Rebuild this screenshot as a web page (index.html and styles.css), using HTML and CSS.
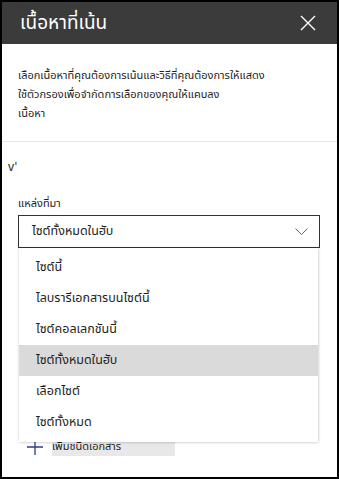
FILE: index.html
```html
<!DOCTYPE html>
<html lang="th">
<head>
<meta charset="utf-8">
<link rel="stylesheet" href="styles.css">
</head>
<body>
<div class="panel">
  <div class="header">
    <h1 class="title">เนื้อหาที่เน้น</h1>
    <svg class="close" width="16" height="16" viewBox="0 0 16 16"><path d="M1 1L15 15M15 1L1 15" stroke="#fff" stroke-width="1.4" fill="none"/></svg>
  </div>
  <div class="desc">
    <p>เลือกเนื้อหาที่คุณต้องการเน้นและวิธีที่คุณต้องการให้แสดง</p>
    <p>ใช้ตัวกรองเพื่อจำกัดการเลือกของคุณให้แคบลง</p>
    <p>เนื้อหา</p>
  </div>
  <div class="sep"></div>
  <div class="stray">v'</div>
  <div class="field">
    <div class="label">แหล่งที่มา</div>
    <div class="select">
      <span>ไซต์ทั้งหมดในฮับ</span>
      <svg class="chev" width="13" height="7" viewBox="0 0 13 7"><path d="M0.5 0.5L6.5 6.5L12.5 0.5" stroke="#666" stroke-width="1" fill="none"/></svg>
    </div>
  </div>
  <div class="add">
    <svg class="plus" width="16" height="16" viewBox="0 0 16 16"><path d="M8 0V16M0 8H16" stroke="#2b3990" stroke-width="1.3" fill="none"/></svg>
    <span class="add-text">เพิ่มชนิดเอกสาร</span>
  </div>
  <ul class="menu">
    <li>ไซต์นี้</li>
    <li>ไลบรารีเอกสารบนไซต์นี้</li>
    <li>ไซต์คอลเลกชันนี้</li>
    <li class="active">ไซต์ทั้งหมดในฮับ</li>
    <li>เลือกไซต์</li>
    <li>ไซต์ทั้งหมด</li>
  </ul>
</div>
</body>
</html>
```
FILE: styles.css
```css
html, body {
  margin: 0;
  padding: 0;
  background: #fff;
}
body {
  font-family: "Noto Sans Thai", "Leelawadee UI", "Noto Sans", "DejaVu Sans", sans-serif;
  color: #1e1e1e;
}
.panel {
  position: relative;
  width: 339px;
  height: 479px;
  box-sizing: border-box;
  border: 2px solid #000;
  overflow: hidden;
}
.header {
  height: 42px;
  background: #3b3b3b;
  display: flex;
  align-items: center;
  justify-content: space-between;
  padding: 0 21px 0 18px;
}
.title {
  margin: 0;
  font-size: 19px;
  font-weight: normal;
  color: #fff;
}
.desc {
  padding: 22px 16px 0;
  font-size: 11px;
  line-height: 19px;
  height: 75px;
}
.desc p {
  margin: 0;
}
.sep {
  height: 1px;
  background: #e6e6e6;
}
.stray {
  padding: 17px 0 0 6px;
  font-size: 12px;
  line-height: 16px;
  height: 23px;
}
.field {
  padding: 0 17px 0 16px;
}
.label {
  font-size: 11px;
  line-height: 16px;
  padding-top: 14px;
  height: 19px;
}
.select {
  height: 31px;
  border: 1px solid #323232;
  display: flex;
  align-items: center;
  justify-content: space-between;
  padding: 0 11px 0 13px;
  font-size: 12.5px;
}
.add {
  margin-top: 190px;
  padding-left: 25px;
  display: flex;
  align-items: center;
  gap: 9px;
}
.add-text {
  background: #e8e8e8;
  font-size: 11px;
  line-height: 18px;
  width: 123px;
}
.menu {
  position: absolute;
  left: 17px;
  top: 246px;
  width: 299px;
  margin: 0;
  padding: 4px 0;
  list-style: none;
  background: #fff;
  box-shadow: 0 0 3px rgba(0, 0, 0, 0.18), 1px 1px 2px rgba(0, 0, 0, 0.08);
}
.menu li {
  height: 31px;
  line-height: 31px;
  padding-left: 17px;
  font-size: 12.5px;
}
.menu li.active {
  background: #dadada;
}
```
